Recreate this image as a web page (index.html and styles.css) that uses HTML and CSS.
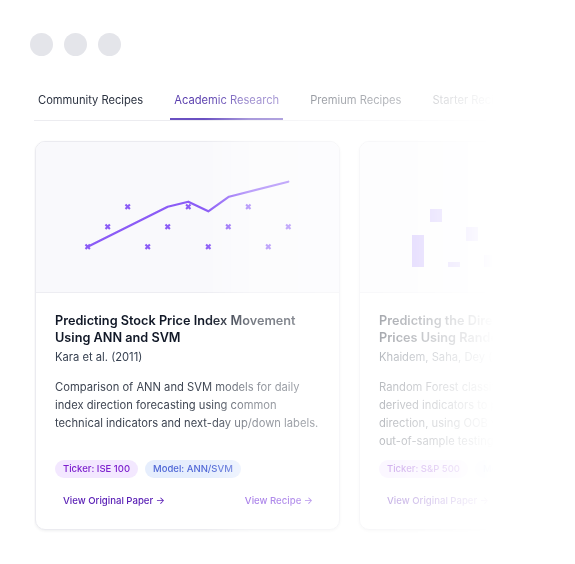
FILE: index.html
```html
<!DOCTYPE html>
<html lang="en">
<head>
<meta charset="utf-8">
<title>Academic Research Recipes</title>
<link rel="stylesheet" href="styles.css">
</head>
<body>
<div class="frame">
  <div class="dots">
    <span class="dot"></span><span class="dot"></span><span class="dot"></span>
  </div>
  <div class="main">
    <nav class="tabs">
      <span class="tab">Community Recipes</span>
      <span class="tab active">Academic Research</span>
      <span class="tab">Premium Recipes</span>
      <span class="tab">Starter Recipes</span>
    </nav>
    <div class="cards">
      <article class="card">
        <div class="media">
          <svg class="chart" width="303" height="150" viewBox="0 0 303 150">
            <g class="marks">
              <path d="M49.5 102.5l4.4 4.4m0-4.4l-4.4 4.4"/>
              <path d="M69.5 82.5l4.4 4.4m0-4.4l-4.4 4.4"/>
              <path d="M89.5 62.5l4.4 4.4m0-4.4l-4.4 4.4"/>
              <path d="M109.5 102.5l4.4 4.4m0-4.4l-4.4 4.4"/>
              <path d="M129.5 82.5l4.4 4.4m0-4.4l-4.4 4.4"/>
              <path d="M150.1 62.5l4.4 4.4m0-4.4l-4.4 4.4"/>
              <path d="M170.1 102.5l4.4 4.4m0-4.4l-4.4 4.4"/>
              <path d="M190.1 82.5l4.4 4.4m0-4.4l-4.4 4.4"/>
              <path d="M210.1 62.5l4.4 4.4m0-4.4l-4.4 4.4"/>
              <path d="M230.1 102.5l4.4 4.4m0-4.4l-4.4 4.4"/>
              <path d="M250.1 82.5l4.4 4.4m0-4.4l-4.4 4.4"/>
            </g>
            <polyline class="line" points="51.7,104.7 131.7,64.7 152.3,59.7 172.3,69.3 193,54.7 252.3,39.7"/>
          </svg>
        </div>
        <div class="body">
          <h3 class="title">Predicting Stock Price Index Movement Using ANN and SVM</h3>
          <p class="authors">Kara et al. (2011)</p>
          <p class="desc">Comparison of ANN and SVM models for daily index direction forecasting using common technical indicators and next-day up/down labels.</p>
          <div class="tags">
            <span class="tag tag-ticker">Ticker: ISE 100</span>
            <span class="tag tag-model">Model: ANN/SVM</span>
          </div>
          <div class="links">
            <a class="link link-paper" href="#">View Original Paper &rarr;</a>
            <a class="link link-recipe" href="#">View Recipe &rarr;</a>
          </div>
        </div>
      </article>
      <article class="card">
        <div class="media">
          <svg class="chart" width="303" height="150" viewBox="0 0 303 150">
            <g class="bars">
              <rect x="52" y="93" width="12" height="32"/>
              <rect x="70" y="67" width="12" height="13"/>
              <rect x="88" y="120" width="12" height="5"/>
              <rect x="106" y="85" width="12" height="14"/>
              <rect x="124" y="113" width="12" height="12"/>
              <rect x="142" y="72" width="12" height="20"/>
              <rect x="160" y="100" width="12" height="25"/>
              <rect x="178" y="60" width="12" height="16"/>
              <rect x="196" y="90" width="12" height="35"/>
            </g>
          </svg>
        </div>
        <div class="body">
          <h3 class="title">Predicting the Direction of Stock Market Prices Using Random Forest</h3>
          <p class="authors">Khaidem, Saha, Dey (2016)</p>
          <p class="desc">Random Forest classifier on smoothed, technically<br>derived indicators to predict stock price<br>direction, using OOB validation and<br>out-of-sample testing.</p>
          <div class="tags">
            <span class="tag tag-ticker">Ticker: S&amp;P 500</span>
            <span class="tag tag-model">Model: Random Forest</span>
          </div>
          <div class="links">
            <a class="link link-paper" href="#">View Original Paper &rarr;</a>
            <a class="link link-recipe" href="#">View Recipe &rarr;</a>
          </div>
        </div>
      </article>
    </div>
  </div>
</div>
</body>
</html>
```
FILE: styles.css
```css
* { box-sizing: border-box; }

html, body {
  margin: 0;
  background: #ffffff;
  overflow: hidden;
}

body {
  font-family: Inter, "Noto Sans", "Liberation Sans", sans-serif;
  color: #111827;
  -webkit-font-smoothing: antialiased;
}

.frame {
  padding: 33px 0 0 30px;
}

.dots {
  display: flex;
  gap: 11px;
}

.dot {
  width: 23px;
  height: 23px;
  border-radius: 50%;
  background: #e4e5ea;
}

.main {
  margin-top: 36px;
  margin-left: 4px;
  width: 700px;
  -webkit-mask-image: linear-gradient(90deg, #000 0, #000 170px, rgba(0,0,0,.58) 215px, rgba(0,0,0,.36) 350px, transparent 460px);
  mask-image: linear-gradient(90deg, #000 0, #000 170px, rgba(0,0,0,.58) 215px, rgba(0,0,0,.36) 350px, transparent 460px);
}

.tabs {
  display: flex;
  gap: 23px;
  border-bottom: 1px solid #ececf0;
}

.tab {
  font-size: 11.15px;
  line-height: 16px;
  padding: 0 4px 10px;
  border-bottom: 2px solid transparent;
  color: #2b3240;
  white-space: nowrap;
}

.tab.active {
  color: #5a3fae;
  border-bottom-color: #6a50c2;
}

.cards {
  display: grid;
  grid-template-columns: 305px 305px;
  gap: 19px;
  margin: 20px 0 0 1px;
  padding-bottom: 20px;
}

.card {
  display: flex;
  flex-direction: column;
  background: #fff;
  border: 1px solid #ebebf0;
  border-radius: 10px;
  box-shadow: 0 1px 3px rgba(16, 24, 40, .07);
  overflow: hidden;
}

.media {
  height: 151px;
  background: #f9f9fc;
  border-bottom: 1px solid #ededf2;
}

.chart { display: block; }

.marks path {
  fill: none;
  stroke: #8b5cf6;
  stroke-width: 2.1;
}

.line {
  fill: none;
  stroke: #8b5cf6;
  stroke-width: 2.2;
  stroke-linejoin: round;
  stroke-linecap: round;
}

.bars rect { fill: #a78bfa; }

.body {
  flex: 1;
  display: flex;
  flex-direction: column;
  padding: 19px 18px 18px 19px;
}

.title {
  margin: 0;
  font-size: 12.7px;
  line-height: 17px;
  font-weight: 600;
  color: #111827;
}

.authors {
  margin: 3px 0 0;
  font-size: 11.2px;
  line-height: 17px;
  color: #374151;
}

.desc {
  margin: 12px 0 0;
  font-size: 11.2px;
  line-height: 18px;
  color: #3f4653;
}

.tags {
  margin-top: auto;
  padding-top: 10px;
  display: flex;
  gap: 7px;
}

.tag {
  font-size: 9.5px;
  line-height: 18px;
  font-weight: 500;
  padding: 0 8px;
  border-radius: 9px;
  white-space: nowrap;
}

.tag-ticker {
  background: #f3e8ff;
  color: #7e22ce;
}

.tag-model {
  background: #e6eefd;
  color: #4f67d6;
}

.links {
  margin-top: 13px;
  display: flex;
  justify-content: space-between;
}

.link {
  font-size: 9.6px;
  line-height: 20px;
  font-weight: 500;
  padding: 0 8px;
  text-decoration: none;
  white-space: nowrap;
}

.link-paper { color: #5b21b6; }
.link-recipe { color: #6d28d9; }
```
